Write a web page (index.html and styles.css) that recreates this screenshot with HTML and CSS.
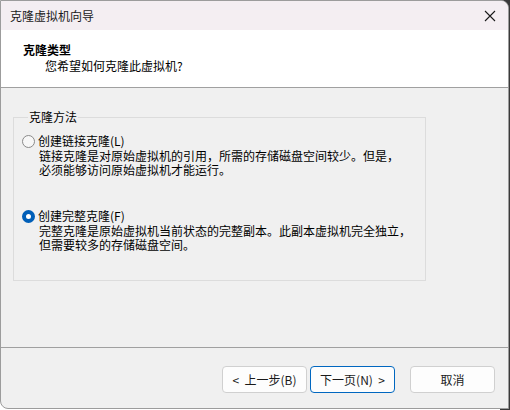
FILE: index.html
```html
<!DOCTYPE html>
<html lang="zh-CN">
<head>
    <meta charset="UTF-8">
    <title>克隆虚拟机向导</title>
    <link rel="stylesheet" href="styles.css">
</head>
<body>
    <div class="window">
        <div class="titlebar">
            <span class="title">克隆虚拟机向导</span>
            <span class="close">
                <svg width="12" height="12" viewBox="0 0 12 12"><path d="M1 1L11 11M11 1L1 11" stroke="#1a1a1a" stroke-width="1.1" fill="none"/></svg>
            </span>
        </div>
        <div class="header">
            <div class="head-title">克隆类型</div>
            <div class="head-sub">您希望如何克隆此虚拟机?</div>
        </div>
        <div class="content">
            <fieldset class="group">
                <legend>克隆方法</legend>
                <div class="option">
                    <div class="radio-row"><span class="radio"></span>创建链接克隆(L)</div>
                    <div class="desc">
                        <div>链接克隆是对原始虚拟机的引用，所需的存储磁盘空间较少。但是，</div>
                        <div>必须能够访问原始虚拟机才能运行。</div>
                    </div>
                </div>
                <div class="option">
                    <div class="radio-row"><span class="radio checked"></span>创建完整克隆(F)</div>
                    <div class="desc">
                        <div>完整克隆是原始虚拟机当前状态的完整副本。此副本虚拟机完全独立，</div>
                        <div>但需要较多的存储磁盘空间。</div>
                    </div>
                </div>
            </fieldset>
        </div>
        <div class="footer">
            <button class="btn">&lt;&nbsp; 上一步(B)</button>
            <button class="btn primary">下一页(N) &nbsp;&gt;</button>
            <button class="btn cancel">取消</button>
        </div>
    </div>
</body>
</html>
```

FILE: styles.css
```css
body {
    margin: 0;
    background: linear-gradient(to right, #ffffff 500px, #3a3a3a 500px);
    font-family: "Noto Sans CJK SC", "Liberation Sans", sans-serif;
    font-size: 12px;
    color: #000;
}
.window {
    width: 507px;
    height: 407px;
    border: 1px solid #9c9c9c;
    border-radius: 0 8px 0 8px;
    background: #f0f0f0;
    overflow: hidden;
    display: flex;
    flex-direction: column;
}
.titlebar {
    height: 29px;
    background: #f4eef2;
    display: flex;
    align-items: center;
    justify-content: space-between;
    padding: 0 10px 0 9px;
}
.title {
    font-size: 12px;
    color: #1a1a1a;
}
.close {
    display: flex;
    margin-right: 2px;
}
.header {
    height: 58px;
    background: #fff;
    border-bottom: 1px solid #a0a0a0;
    padding: 12px 0 0 22px;
    box-sizing: border-box;
}
.head-title {
    font-weight: bold;
    line-height: 16px;
}
.head-sub {
    line-height: 16px;
    margin-left: 22px;
}
.content {
    height: 260px;
    padding: 22px 0 0 12px;
    box-sizing: border-box;
    border-bottom: 1px solid #a0a0a0;
}
.group {
    width: 413px;
    height: 171px;
    box-sizing: border-box;
    margin: 0;
    border: 1px solid #dcdcdc;
    padding: 10px 0 0 8px;
}
.group legend {
    padding: 0 1px;
    margin-left: 6px;
    line-height: 14px;
}
.option {
    margin-bottom: 32px;
}
.radio-row {
    display: flex;
    align-items: center;
    line-height: 14px;
    gap: 3px;
}
.radio {
    width: 11px;
    height: 11px;
    border: 1px solid #8a8a8a;
    border-radius: 50%;
    background: #f7f7f7;
}
.radio.checked {
    width: 5px;
    height: 5px;
    border: 4px solid #005fb8;
    background: #fff;
}
.desc {
    margin-left: 17px;
    margin-top: 1px;
    line-height: 14px;
}
.footer {
    flex: 1;
    display: flex;
    align-items: flex-start;
    padding: 18px 0 0 221px;
}
.btn {
    width: 85px;
    height: 27px;
    border: 1px solid #d0d0d0;
    border-radius: 4px;
    background: #fdfdfd;
    font-family: inherit;
    font-size: 12px;
    color: #1a1a1a;
    padding: 0;
    margin-right: 3px;
}
.btn.primary {
    border-color: #0067c0;
}
.btn.cancel {
    margin-left: 12px;
}
```
